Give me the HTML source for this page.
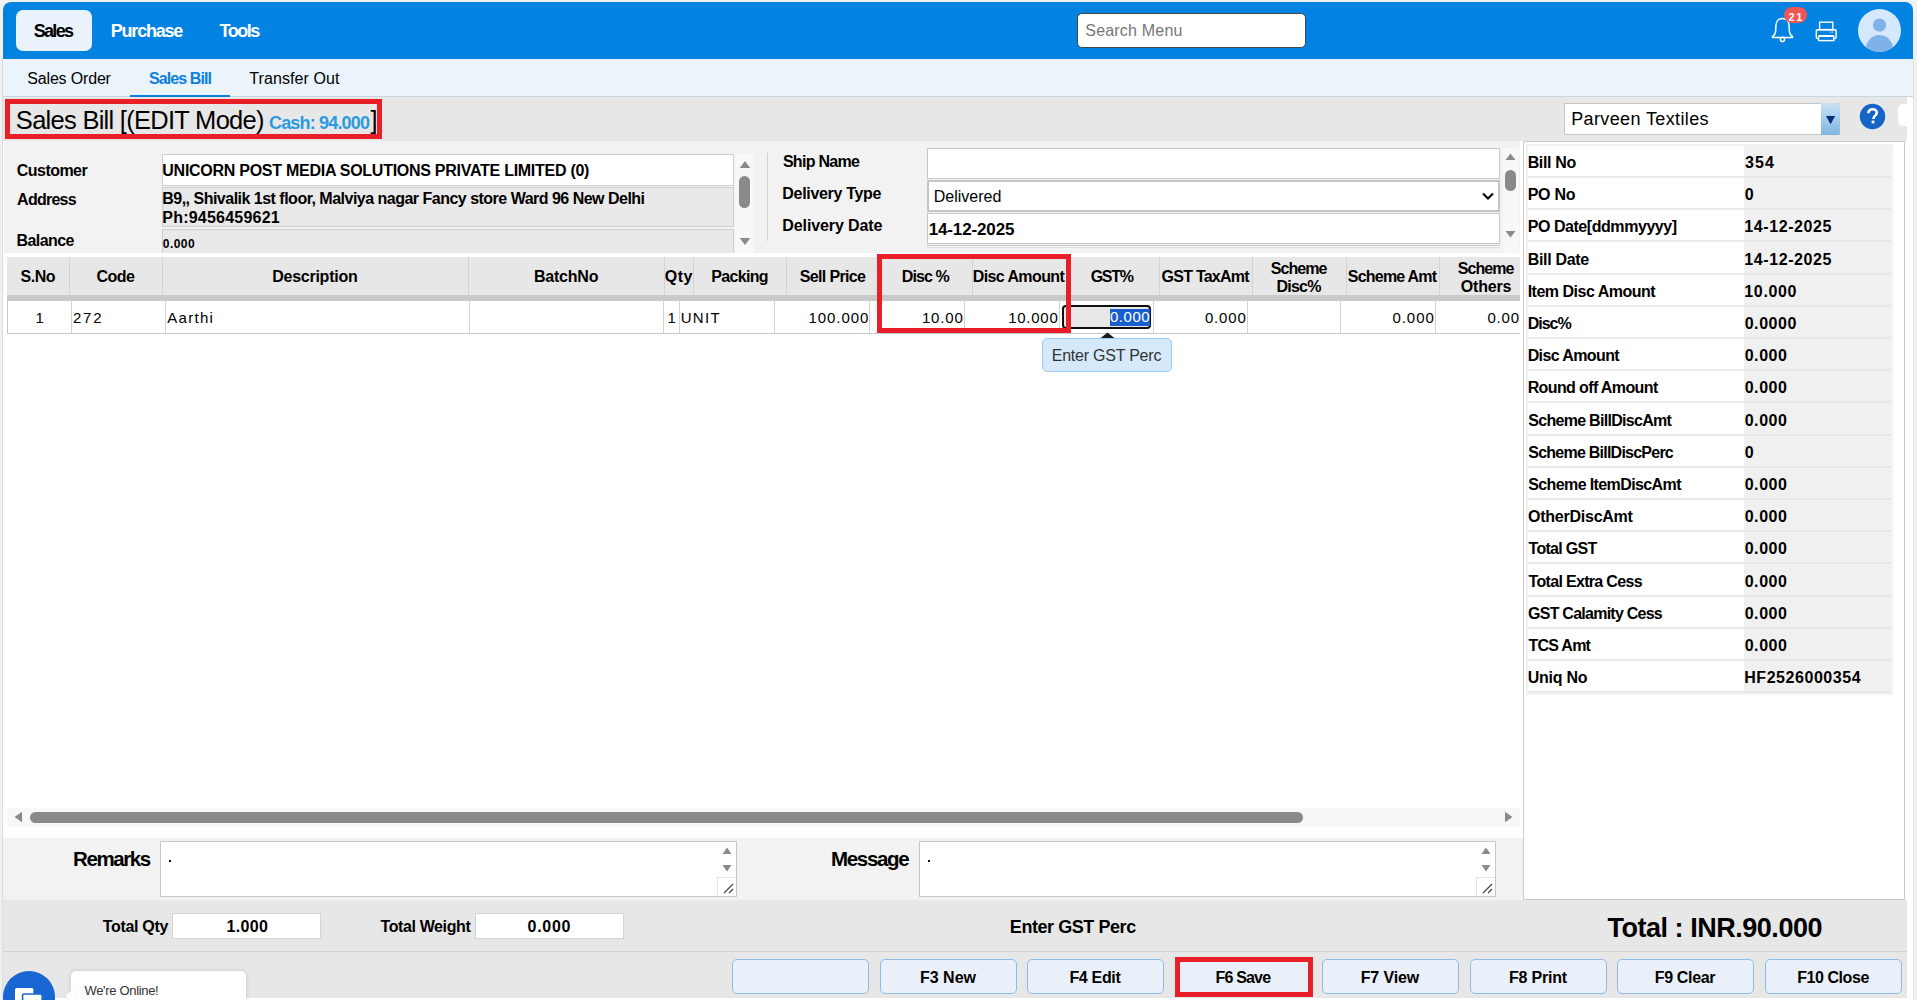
<!DOCTYPE html>
<html><head><meta charset="utf-8"><title>Sales Bill</title>
<style>
html,body{margin:0;padding:0;}
body{width:1917px;height:1000px;position:relative;overflow:hidden;background:#f1f1f1;font-family:"Liberation Sans",sans-serif;color:#000;}
.a{position:absolute;box-sizing:border-box;}
.t{position:absolute;white-space:pre;line-height:1;}
svg{position:absolute;overflow:visible;}
</style></head><body>
<div class="a" style="left:2px;top:59px;width:1912px;height:941px;background:#fff;border-left:1px solid #dcdcdc;border-right:1px solid #e2e2e2"></div>
<div class="a" style="left:3px;top:2px;width:1910px;height:57px;background:#0283e2;border-radius:8px 8px 0 0"></div>
<div class="a" style="left:16px;top:10px;width:76px;height:41px;background:#eaf2fb;border-radius:7px"></div>
<div class="t" style="left:33.66px;top:22.26px;font-size:18px;font-weight:700;letter-spacing:-1.680px;">Sales</div>
<div class="t" style="left:110.83px;top:22.26px;font-size:18px;font-weight:700;letter-spacing:-1.229px;color:#fff;">Purchase</div>
<div class="t" style="left:219.42px;top:22.26px;font-size:18px;font-weight:700;letter-spacing:-1.430px;color:#fff;">Tools</div>
<div class="a" style="left:1077px;top:13px;width:229px;height:35px;background:#fff;border:1px solid #3f4a45;border-radius:5px"></div>
<div class="t" style="left:1085.28px;top:22.66px;font-size:16px;letter-spacing:0.194px;color:#767676;">Search Menu</div>
<svg style="left:1770px;top:16px" width="26" height="28" viewBox="0 0 26 28">
<path d="M12.5 2.4c-4 0-6.4 3.2-6.6 7.2l-.3 6c-.1 2-1.2 3.7-3.2 5.1v.9h20.2v-.9c-2-1.4-3.1-3.1-3.2-5.1l-.3-6c-.2-4-2.6-7.2-6.6-7.2z" fill="none" stroke="#fff" stroke-width="1.5" stroke-linejoin="round"/>
<circle cx="12.5" cy="23.4" r="2.1" fill="none" stroke="#fff" stroke-width="1.4"/>
</svg>
<div class="a" style="left:1784px;top:7px;width:23px;height:16px;background:#f25555;border-radius:8px"></div>
<div class="t" style="left:1788.62px;top:11.79px;font-size:11px;font-weight:700;letter-spacing:1.450px;color:#fff;">21</div>
<svg style="left:1814px;top:20px" width="26" height="24" viewBox="0 0 26 24">
<rect x="5.6" y="2.2" width="13.2" height="7.4" fill="none" stroke="#fff" stroke-width="1.4"/>
<path d="M5 9.6H3.4c-.6 0-1.1.5-1.1 1.1v6.8c0 .6.5 1.1 1.1 1.1H5M19.4 9.6H21c.6 0 1.1.5 1.1 1.1v6.8c0 .6-.5 1.1-1.1 1.1h-1.6" fill="none" stroke="#fff" stroke-width="1.4"/>
<rect x="3" y="9.2" width="18.4" height="1.4" fill="#fff"/>
<rect x="4.6" y="16.2" width="15.2" height="4.4" fill="none" stroke="#fff" stroke-width="1.4"/>
<rect x="5" y="15" width="14.4" height="1.2" fill="#fff"/>
<rect x="15.8" y="11.6" width="1.1" height="1" fill="#fff"/><rect x="17.8" y="11.6" width="1.1" height="1" fill="#fff"/>
</svg>
<svg style="left:1858px;top:9px" width="43" height="43" viewBox="0 0 43 43">
<defs><clipPath id="avc"><circle cx="21.5" cy="21.5" r="21.5"/></clipPath></defs>
<circle cx="21.5" cy="21.5" r="21.5" fill="#d6e8fb"/>
<g clip-path="url(#avc)"><circle cx="21.5" cy="16" r="6.6" fill="#7fb2ea"/>
<ellipse cx="21.5" cy="40" rx="13.5" ry="14" fill="#7fb2ea"/></g>
</svg>
<div class="a" style="left:3px;top:59px;width:1910px;height:38px;background:#ebf3fb;border-bottom:1px solid #c9d7e3"></div>
<div class="t" style="left:27.28px;top:71.46px;font-size:16px;letter-spacing:-0.170px;">Sales Order</div>
<div class="t" style="left:149.02px;top:71.46px;font-size:16px;font-weight:700;letter-spacing:-0.900px;color:#0a7fe0;">Sales Bill</div>
<div class="a" style="left:130px;top:95px;width:100px;height:2px;background:#0a7fe0"></div>
<div class="t" style="left:249.28px;top:71.46px;font-size:16px;letter-spacing:0.082px;">Transfer Out</div>
<div class="a" style="left:3px;top:97px;width:1904px;height:44px;background:#e7e7e7"></div>
<div class="a" style="left:5px;top:99px;width:377px;height:40px;border:5px solid #e81f27"></div>
<div class="t" style="left:15.85px;top:108.01px;font-size:25.5px;letter-spacing:-0.721px;">Sales Bill [(EDIT Mode)</div>
<div class="t" style="left:268.98px;top:113.76px;font-size:18px;font-weight:700;letter-spacing:-0.821px;color:#2b9ae0;">Cash: 94.000</div>
<div class="t" style="left:370.47px;top:108.01px;font-size:25.5px;">]</div>
<div class="a" style="left:1564px;top:103px;width:276px;height:32px;background:#fff;border:1px solid #c6c6c6"></div>
<div class="a" style="left:1821px;top:103px;width:19px;height:32px;background:linear-gradient(#c9e2f5,#7fb6e3);border-radius:0 3px 3px 0"></div>
<svg style="left:1825px;top:115px" width="12" height="10" viewBox="0 0 12 10"><path d="M1 1h9.2L5.6 9.2z" fill="#0b2f7e"/></svg>
<div class="t" style="left:1571.16px;top:110.06px;font-size:18px;letter-spacing:0.381px;">Parveen Textiles</div>
<svg style="left:1859px;top:103px" width="27" height="27" viewBox="0 0 27 27">
<circle cx="13.5" cy="13.5" r="12.7" fill="#1565c9"/>
<path d="M9.4 10.2c0-2.4 1.8-4 4.2-4s4.2 1.5 4.2 3.6c0 2.6-3.3 3-3.3 5.6v.5" fill="none" stroke="#fff" stroke-width="2.6"/>
<rect x="12.6" y="17.6" width="2.8" height="2.8" fill="#fff"/>
</svg>
<div class="a" style="left:1898px;top:104px;width:9px;height:22px;background:#fff;border-radius:5px 0 0 5px"></div>
<div class="a" style="left:4px;top:141px;width:1516px;height:112px;background:#f2f2f2"></div>
<div class="t" style="left:16.86px;top:162.86px;font-size:16px;font-weight:700;letter-spacing:-0.549px;">Customer</div>
<div class="t" style="left:17.10px;top:191.86px;font-size:16px;font-weight:700;letter-spacing:-0.743px;">Address</div>
<div class="t" style="left:16.46px;top:232.76px;font-size:16px;font-weight:700;letter-spacing:-0.560px;">Balance</div>
<div class="a" style="left:162px;top:154px;width:572px;height:32px;background:#fff;border:1px solid #cfcfcf"></div>
<div class="t" style="left:162.34px;top:162.56px;font-size:16px;font-weight:700;letter-spacing:-0.268px;">UNICORN POST MEDIA SOLUTIONS PRIVATE LIMITED (0)</div>
<div class="a" style="left:162px;top:187px;width:572px;height:40px;background:#e9e9e9;border:1px solid #cfcfcf"></div>
<div class="t" style="left:162.26px;top:191.26px;font-size:16px;font-weight:700;letter-spacing:-0.509px;">B9,, Shivalik 1st floor, Malviya nagar Fancy store Ward 96 New Delhi</div>
<div class="t" style="left:162.26px;top:209.56px;font-size:16px;font-weight:700;letter-spacing:0.227px;">Ph:9456459621</div>
<div class="a" style="left:162px;top:229px;width:572px;height:24px;background:#e9e9e9;border:1px solid #cfcfcf;border-bottom:none"></div>
<div class="t" style="left:162.82px;top:237.94px;font-size:12px;font-weight:700;letter-spacing:0.440px;">0.000</div>
<div class="a" style="left:735px;top:153px;width:19px;height:100px;background:#f8f8f8"></div>
<svg style="left:739px;top:160px" width="12" height="9" viewBox="0 0 12 9"><path d="M0.7 8h10.6L6 1z" fill="#8a8a8a"/></svg>
<div class="a" style="left:739px;top:176px;width:11px;height:32px;background:#8a8a8a;border-radius:6px"></div>
<svg style="left:739px;top:237px" width="12" height="9" viewBox="0 0 12 9"><path d="M0.7 1h10.6L6 8z" fill="#8a8a8a"/></svg>
<div class="a" style="left:767px;top:153px;width:1px;height:88px;background:#d2d2d2"></div>
<div class="t" style="left:782.92px;top:154.46px;font-size:16px;font-weight:700;letter-spacing:-0.712px;">Ship Name</div>
<div class="t" style="left:782.36px;top:186.06px;font-size:16px;font-weight:700;letter-spacing:-0.323px;">Delivery Type</div>
<div class="t" style="left:782.36px;top:217.86px;font-size:16px;font-weight:700;letter-spacing:-0.113px;">Delivery Date</div>
<div class="a" style="left:927px;top:148px;width:573px;height:31px;background:#fff;border:1px solid #c8c8c8"></div>
<div class="a" style="left:927px;top:180px;width:573px;height:32px;background:#fff;border:2px solid #c4c4c4"></div>
<div class="t" style="left:933.72px;top:189.06px;font-size:16px;">Delivered</div>
<svg style="left:1481px;top:191px" width="14" height="10" viewBox="0 0 14 10"><path d="M2 2.5l5 5 5-5" fill="none" stroke="#000" stroke-width="2"/></svg>
<div class="a" style="left:927px;top:213px;width:573px;height:31px;background:#fff;border:1px solid #c8c8c8"></div>
<div class="t" style="left:928.68px;top:221.41px;font-size:17px;font-weight:700;letter-spacing:-0.134px;">14-12-2025</div>
<div class="a" style="left:927px;top:245px;width:573px;height:3px;background:#f7f7f7;border-top:1px solid #c8c8c8;border-bottom:1px solid #dedede"></div>
<div class="a" style="left:1503px;top:148px;width:16px;height:105px;background:#f8f8f8"></div>
<svg style="left:1505px;top:152px" width="11" height="9" viewBox="0 0 11 9"><path d="M0.5 8h10L5.5 1.5z" fill="#8a8a8a"/></svg>
<div class="a" style="left:1505px;top:170px;width:11px;height:21px;background:#8a8a8a;border-radius:6px"></div>
<svg style="left:1505px;top:230px" width="11" height="9" viewBox="0 0 11 9"><path d="M0.5 1h10L5.5 7.5z" fill="#8a8a8a"/></svg>
<div class="a" style="left:7px;top:257px;width:1513px;height:38px;background:#e7e7e7"></div>
<div class="a" style="left:7px;top:295px;width:1513px;height:6px;background:#c9c9c9"></div>
<div class="a" style="left:69px;top:257px;width:1px;height:38px;background:#d2d2d2"></div>
<div class="a" style="left:162px;top:257px;width:1px;height:38px;background:#d2d2d2"></div>
<div class="a" style="left:468px;top:257px;width:1px;height:38px;background:#d2d2d2"></div>
<div class="a" style="left:664px;top:257px;width:1px;height:38px;background:#d2d2d2"></div>
<div class="a" style="left:693px;top:257px;width:1px;height:38px;background:#d2d2d2"></div>
<div class="a" style="left:786px;top:257px;width:1px;height:38px;background:#d2d2d2"></div>
<div class="a" style="left:877px;top:257px;width:1px;height:38px;background:#d2d2d2"></div>
<div class="a" style="left:972px;top:257px;width:1px;height:38px;background:#d2d2d2"></div>
<div class="a" style="left:1066px;top:257px;width:1px;height:38px;background:#d2d2d2"></div>
<div class="a" style="left:1159px;top:257px;width:1px;height:38px;background:#d2d2d2"></div>
<div class="a" style="left:1252px;top:257px;width:1px;height:38px;background:#d2d2d2"></div>
<div class="a" style="left:1346px;top:257px;width:1px;height:38px;background:#d2d2d2"></div>
<div class="a" style="left:1439px;top:257px;width:1px;height:38px;background:#d2d2d2"></div>
<div class="a" style="left:7px;top:301px;width:1513px;height:33px;background:#fff;border-left:1px solid #c8c8c8;border-bottom:1px solid #c8c8c8"></div>
<div class="a" style="left:71px;top:301px;width:1px;height:32px;background:#d2d2d2"></div>
<div class="a" style="left:165px;top:301px;width:1px;height:32px;background:#d2d2d2"></div>
<div class="a" style="left:469px;top:301px;width:1px;height:32px;background:#d2d2d2"></div>
<div class="a" style="left:663px;top:301px;width:1px;height:32px;background:#d2d2d2"></div>
<div class="a" style="left:679px;top:301px;width:1px;height:32px;background:#d2d2d2"></div>
<div class="a" style="left:774px;top:301px;width:1px;height:32px;background:#d2d2d2"></div>
<div class="a" style="left:869px;top:301px;width:1px;height:32px;background:#d2d2d2"></div>
<div class="a" style="left:964px;top:301px;width:1px;height:32px;background:#d2d2d2"></div>
<div class="a" style="left:1059px;top:301px;width:1px;height:32px;background:#d2d2d2"></div>
<div class="a" style="left:1153px;top:301px;width:1px;height:32px;background:#d2d2d2"></div>
<div class="a" style="left:1247px;top:301px;width:1px;height:32px;background:#d2d2d2"></div>
<div class="a" style="left:1340px;top:301px;width:1px;height:32px;background:#d2d2d2"></div>
<div class="a" style="left:1435px;top:301px;width:1px;height:32px;background:#d2d2d2"></div>
<div class="t" style="left:20.47px;top:269.26px;font-size:16px;font-weight:700;letter-spacing:-0.460px;">S.No</div>
<div class="t" style="left:96.51px;top:269.26px;font-size:16px;font-weight:700;letter-spacing:-0.567px;">Code</div>
<div class="t" style="left:272.26px;top:269.26px;font-size:16px;font-weight:700;letter-spacing:-0.260px;">Description</div>
<div class="t" style="left:534.01px;top:269.26px;font-size:16px;font-weight:700;letter-spacing:-0.230px;">BatchNo</div>
<div class="t" style="left:664.71px;top:269.26px;font-size:16px;font-weight:700;letter-spacing:0.490px;">Qty</div>
<div class="t" style="left:711.26px;top:269.26px;font-size:16px;font-weight:700;letter-spacing:-0.680px;">Packing</div>
<div class="t" style="left:799.77px;top:269.26px;font-size:16px;font-weight:700;letter-spacing:-0.651px;">Sell Price</div>
<div class="t" style="left:901.76px;top:269.26px;font-size:16px;font-weight:700;letter-spacing:-0.888px;">Disc %</div>
<div class="t" style="left:972.76px;top:269.26px;font-size:16px;font-weight:700;letter-spacing:-0.600px;">Disc Amount</div>
<div class="t" style="left:1090.66px;top:269.26px;font-size:16px;font-weight:700;letter-spacing:-1.293px;">GST%</div>
<div class="t" style="left:1161.61px;top:269.26px;font-size:16px;font-weight:700;letter-spacing:-0.767px;">GST TaxAmt</div>
<div class="t" style="left:1270.82px;top:261.06px;font-size:16px;font-weight:700;letter-spacing:-0.944px;">Scheme</div>
<div class="t" style="left:1276.51px;top:279.06px;font-size:16px;font-weight:700;letter-spacing:-0.765px;">Disc%</div>
<div class="t" style="left:1347.82px;top:269.26px;font-size:16px;font-weight:700;letter-spacing:-0.787px;">Scheme Amt</div>
<div class="t" style="left:1457.82px;top:261.06px;font-size:16px;font-weight:700;letter-spacing:-0.944px;">Scheme</div>
<div class="t" style="left:1460.81px;top:279.06px;font-size:16px;font-weight:700;letter-spacing:-0.188px;">Others</div>
<div class="t" style="left:35.41px;top:310.30px;font-size:15px;">1</div>
<div class="t" style="left:72.95px;top:310.30px;font-size:15px;letter-spacing:1.762px;">272</div>
<div class="t" style="left:167.30px;top:310.30px;font-size:15px;letter-spacing:1.285px;">Aarthi</div>
<div class="t" style="left:667.55px;top:310.30px;font-size:15px;">1</div>
<div class="t" style="left:680.67px;top:310.30px;font-size:15px;letter-spacing:1.325px;">UNIT</div>
<div class="t" style="left:808.58px;top:310.30px;font-size:15px;letter-spacing:0.904px;">100.000</div>
<div class="t" style="left:921.88px;top:310.30px;font-size:15px;letter-spacing:0.863px;">10.00</div>
<div class="t" style="left:1008.17px;top:310.30px;font-size:15px;letter-spacing:0.750px;">10.000</div>
<div class="a" style="left:1062px;top:305px;width:89px;height:24px;background:#e8e8e8;border:2px solid #111;border-radius:4px"></div>
<div class="a" style="left:1110px;top:309px;width:40px;height:17px;background:#1a5fd0"></div>
<div class="t" style="left:1109.90px;top:309.40px;font-size:15px;letter-spacing:0.556px;color:#fff;">0.000</div>
<div class="t" style="left:1204.90px;top:310.30px;font-size:15px;letter-spacing:0.831px;">0.000</div>
<div class="t" style="left:1392.40px;top:310.30px;font-size:15px;letter-spacing:0.981px;">0.000</div>
<div class="t" style="left:1487.40px;top:310.30px;font-size:15px;letter-spacing:0.850px;">0.00</div>
<div class="a" style="left:877px;top:254px;width:194px;height:79px;border:5px solid #e81f27"></div>
<svg style="left:1100px;top:332px" width="15" height="7" viewBox="0 0 15 7"><path d="M0 6.5L7.5 0.5 15 6.5z" fill="#1b1b1b"/></svg>
<div class="a" style="left:1042px;top:338px;width:130px;height:34px;background:#d5e9fb;border:1px solid #9ccaf3;border-radius:5px"></div>
<div class="t" style="left:1051.72px;top:347.66px;font-size:16px;letter-spacing:-0.228px;color:#333;">Enter GST Perc</div>
<div class="a" style="left:7px;top:808px;width:1513px;height:19px;background:#f8f8f8"></div>
<svg style="left:13px;top:811px" width="10" height="12" viewBox="0 0 10 12"><path d="M9 0.7v10.6L1.5 6z" fill="#8a8a8a"/></svg>
<div class="a" style="left:30px;top:812px;width:1273px;height:11px;background:#8a8a8a;border-radius:6px"></div>
<svg style="left:1504px;top:811px" width="10" height="12" viewBox="0 0 10 12"><path d="M1 0.7v10.6L8.5 6z" fill="#8a8a8a"/></svg>
<div class="a" style="left:3px;top:838px;width:1520px;height:62px;background:#f2f2f2"></div>
<div class="t" style="left:72.97px;top:848.75px;font-size:20.5px;font-weight:700;letter-spacing:-1.393px;">Remarks</div>
<div class="t" style="left:830.97px;top:848.65px;font-size:20.5px;font-weight:700;letter-spacing:-1.310px;">Message</div>
<div class="a" style="left:160px;top:841px;width:577px;height:56px;background:#fff;border:1px solid #c8c8c8"></div>
<div class="a" style="left:717px;top:842px;width:19px;height:54px;background:#fff"></div>
<svg style="left:722px;top:846px" width="10" height="9" viewBox="0 0 10 9"><path d="M0.5 8h9L5 1.5z" fill="#8a8a8a"/></svg>
<svg style="left:722px;top:864px" width="10" height="9" viewBox="0 0 10 9"><path d="M0.5 1h9L5 7.5z" fill="#8a8a8a"/></svg>
<div class="a" style="left:717px;top:877px;width:19px;height:19px;background:#fff;border-left:1px solid #e4e4e4;border-top:1px solid #e4e4e4"></div>
<svg style="left:721px;top:881px" width="14" height="14" viewBox="0 0 14 14"><path d="M3 12L12 3M8 12l4-4" fill="none" stroke="#444" stroke-width="1.2"/></svg>
<div class="a" style="left:169px;top:860px;width:2px;height:2px;background:#111"></div>
<div class="a" style="left:919px;top:841px;width:577px;height:56px;background:#fff;border:1px solid #c8c8c8"></div>
<div class="a" style="left:1476px;top:842px;width:19px;height:54px;background:#fff"></div>
<svg style="left:1481px;top:846px" width="10" height="9" viewBox="0 0 10 9"><path d="M0.5 8h9L5 1.5z" fill="#8a8a8a"/></svg>
<svg style="left:1481px;top:864px" width="10" height="9" viewBox="0 0 10 9"><path d="M0.5 1h9L5 7.5z" fill="#8a8a8a"/></svg>
<div class="a" style="left:1476px;top:877px;width:19px;height:19px;background:#fff;border-left:1px solid #e4e4e4;border-top:1px solid #e4e4e4"></div>
<svg style="left:1480px;top:881px" width="14" height="14" viewBox="0 0 14 14"><path d="M3 12L12 3M8 12l4-4" fill="none" stroke="#444" stroke-width="1.2"/></svg>
<div class="a" style="left:928px;top:860px;width:2px;height:2px;background:#111"></div>
<div class="a" style="left:1523px;top:141px;width:382px;height:759px;background:#fff;border:1px solid #cbcbcb"></div>
<div class="a" style="left:1526px;top:144px;width:367px;height:551px;background:#f2f2f2"></div>
<div class="a" style="left:1528px;top:146px;width:216px;height:32px;background:#fff;border-bottom:2px solid #eaeaea"></div>
<div class="a" style="left:1744px;top:146px;width:147px;height:32px;background:#f0f0f0;border-bottom:2px solid #e6e6e6"></div>
<div class="t" style="left:1527.66px;top:155.06px;font-size:16px;font-weight:700;letter-spacing:-0.360px;">Bill No</div>
<div class="t" style="left:1744.90px;top:155.06px;font-size:16px;font-weight:700;letter-spacing:1.120px;">354</div>
<div class="a" style="left:1528px;top:178px;width:216px;height:32px;background:#fff;border-bottom:2px solid #eaeaea"></div>
<div class="a" style="left:1744px;top:178px;width:147px;height:32px;background:#f0f0f0;border-bottom:2px solid #e6e6e6"></div>
<div class="t" style="left:1527.66px;top:187.26px;font-size:16px;font-weight:700;letter-spacing:-0.250px;">PO No</div>
<div class="t" style="left:1744.66px;top:187.26px;font-size:16px;font-weight:700;">0</div>
<div class="a" style="left:1528px;top:210px;width:216px;height:32px;background:#fff;border-bottom:2px solid #eaeaea"></div>
<div class="a" style="left:1744px;top:210px;width:147px;height:32px;background:#f0f0f0;border-bottom:2px solid #e6e6e6"></div>
<div class="t" style="left:1527.66px;top:219.46px;font-size:16px;font-weight:700;letter-spacing:-0.441px;">PO Date[ddmmyyyy]</div>
<div class="t" style="left:1744.34px;top:219.46px;font-size:16px;font-weight:700;letter-spacing:0.591px;">14-12-2025</div>
<div class="a" style="left:1528px;top:242px;width:216px;height:33px;background:#fff;border-bottom:2px solid #eaeaea"></div>
<div class="a" style="left:1744px;top:242px;width:147px;height:33px;background:#f0f0f0;border-bottom:2px solid #e6e6e6"></div>
<div class="t" style="left:1527.66px;top:251.66px;font-size:16px;font-weight:700;letter-spacing:-0.300px;">Bill Date</div>
<div class="t" style="left:1744.34px;top:251.66px;font-size:16px;font-weight:700;letter-spacing:0.591px;">14-12-2025</div>
<div class="a" style="left:1528px;top:275px;width:216px;height:32px;background:#fff;border-bottom:2px solid #eaeaea"></div>
<div class="a" style="left:1744px;top:275px;width:147px;height:32px;background:#f0f0f0;border-bottom:2px solid #e6e6e6"></div>
<div class="t" style="left:1527.66px;top:283.86px;font-size:16px;font-weight:700;letter-spacing:-0.497px;">Item Disc Amount</div>
<div class="t" style="left:1744.34px;top:283.86px;font-size:16px;font-weight:700;letter-spacing:0.628px;">10.000</div>
<div class="a" style="left:1528px;top:307px;width:216px;height:32px;background:#fff;border-bottom:2px solid #eaeaea"></div>
<div class="a" style="left:1744px;top:307px;width:147px;height:32px;background:#f0f0f0;border-bottom:2px solid #e6e6e6"></div>
<div class="t" style="left:1527.66px;top:316.06px;font-size:16px;font-weight:700;letter-spacing:-0.990px;">Disc%</div>
<div class="t" style="left:1744.66px;top:316.06px;font-size:16px;font-weight:700;letter-spacing:0.564px;">0.0000</div>
<div class="a" style="left:1528px;top:339px;width:216px;height:32px;background:#fff;border-bottom:2px solid #eaeaea"></div>
<div class="a" style="left:1744px;top:339px;width:147px;height:32px;background:#f0f0f0;border-bottom:2px solid #e6e6e6"></div>
<div class="t" style="left:1527.66px;top:348.26px;font-size:16px;font-weight:700;letter-spacing:-0.610px;">Disc Amount</div>
<div class="t" style="left:1744.66px;top:348.26px;font-size:16px;font-weight:700;letter-spacing:0.570px;">0.000</div>
<div class="a" style="left:1528px;top:371px;width:216px;height:32px;background:#fff;border-bottom:2px solid #eaeaea"></div>
<div class="a" style="left:1744px;top:371px;width:147px;height:32px;background:#f0f0f0;border-bottom:2px solid #e6e6e6"></div>
<div class="t" style="left:1527.66px;top:380.46px;font-size:16px;font-weight:700;letter-spacing:-0.617px;">Round off Amount</div>
<div class="t" style="left:1744.66px;top:380.46px;font-size:16px;font-weight:700;letter-spacing:0.570px;">0.000</div>
<div class="a" style="left:1528px;top:403px;width:216px;height:33px;background:#fff;border-bottom:2px solid #eaeaea"></div>
<div class="a" style="left:1744px;top:403px;width:147px;height:33px;background:#f0f0f0;border-bottom:2px solid #e6e6e6"></div>
<div class="t" style="left:1528.22px;top:412.66px;font-size:16px;font-weight:700;letter-spacing:-0.704px;">Scheme BillDiscAmt</div>
<div class="t" style="left:1744.66px;top:412.66px;font-size:16px;font-weight:700;letter-spacing:0.570px;">0.000</div>
<div class="a" style="left:1528px;top:436px;width:216px;height:32px;background:#fff;border-bottom:2px solid #eaeaea"></div>
<div class="a" style="left:1744px;top:436px;width:147px;height:32px;background:#f0f0f0;border-bottom:2px solid #e6e6e6"></div>
<div class="t" style="left:1528.22px;top:444.86px;font-size:16px;font-weight:700;letter-spacing:-0.758px;">Scheme BillDiscPerc</div>
<div class="t" style="left:1744.66px;top:444.86px;font-size:16px;font-weight:700;">0</div>
<div class="a" style="left:1528px;top:468px;width:216px;height:32px;background:#fff;border-bottom:2px solid #eaeaea"></div>
<div class="a" style="left:1744px;top:468px;width:147px;height:32px;background:#f0f0f0;border-bottom:2px solid #e6e6e6"></div>
<div class="t" style="left:1528.22px;top:477.06px;font-size:16px;font-weight:700;letter-spacing:-0.609px;">Scheme ItemDiscAmt</div>
<div class="t" style="left:1744.66px;top:477.06px;font-size:16px;font-weight:700;letter-spacing:0.570px;">0.000</div>
<div class="a" style="left:1528px;top:500px;width:216px;height:32px;background:#fff;border-bottom:2px solid #eaeaea"></div>
<div class="a" style="left:1744px;top:500px;width:147px;height:32px;background:#f0f0f0;border-bottom:2px solid #e6e6e6"></div>
<div class="t" style="left:1528.06px;top:509.26px;font-size:16px;font-weight:700;letter-spacing:-0.247px;">OtherDiscAmt</div>
<div class="t" style="left:1744.66px;top:509.26px;font-size:16px;font-weight:700;letter-spacing:0.570px;">0.000</div>
<div class="a" style="left:1528px;top:532px;width:216px;height:32px;background:#fff;border-bottom:2px solid #eaeaea"></div>
<div class="a" style="left:1744px;top:532px;width:147px;height:32px;background:#f0f0f0;border-bottom:2px solid #e6e6e6"></div>
<div class="t" style="left:1528.54px;top:541.46px;font-size:16px;font-weight:700;letter-spacing:-0.700px;">Total GST</div>
<div class="t" style="left:1744.66px;top:541.46px;font-size:16px;font-weight:700;letter-spacing:0.570px;">0.000</div>
<div class="a" style="left:1528px;top:564px;width:216px;height:33px;background:#fff;border-bottom:2px solid #eaeaea"></div>
<div class="a" style="left:1744px;top:564px;width:147px;height:33px;background:#f0f0f0;border-bottom:2px solid #e6e6e6"></div>
<div class="t" style="left:1528.54px;top:573.66px;font-size:16px;font-weight:700;letter-spacing:-0.677px;">Total Extra Cess</div>
<div class="t" style="left:1744.66px;top:573.66px;font-size:16px;font-weight:700;letter-spacing:0.570px;">0.000</div>
<div class="a" style="left:1528px;top:597px;width:216px;height:32px;background:#fff;border-bottom:2px solid #eaeaea"></div>
<div class="a" style="left:1744px;top:597px;width:147px;height:32px;background:#f0f0f0;border-bottom:2px solid #e6e6e6"></div>
<div class="t" style="left:1528.06px;top:605.86px;font-size:16px;font-weight:700;letter-spacing:-0.753px;">GST Calamity Cess</div>
<div class="t" style="left:1744.66px;top:605.86px;font-size:16px;font-weight:700;letter-spacing:0.570px;">0.000</div>
<div class="a" style="left:1528px;top:629px;width:216px;height:32px;background:#fff;border-bottom:2px solid #eaeaea"></div>
<div class="a" style="left:1744px;top:629px;width:147px;height:32px;background:#f0f0f0;border-bottom:2px solid #e6e6e6"></div>
<div class="t" style="left:1528.54px;top:638.06px;font-size:16px;font-weight:700;letter-spacing:-0.760px;">TCS Amt</div>
<div class="t" style="left:1744.66px;top:638.06px;font-size:16px;font-weight:700;letter-spacing:0.570px;">0.000</div>
<div class="a" style="left:1528px;top:661px;width:216px;height:32px;background:#fff;border-bottom:2px solid #eaeaea"></div>
<div class="a" style="left:1744px;top:661px;width:147px;height:32px;background:#f0f0f0;border-bottom:2px solid #e6e6e6"></div>
<div class="t" style="left:1527.74px;top:670.26px;font-size:16px;font-weight:700;letter-spacing:-0.247px;">Uniq No</div>
<div class="t" style="left:1744.26px;top:670.26px;font-size:16px;font-weight:700;letter-spacing:0.545px;">HF2526000354</div>
<div class="a" style="left:3px;top:900px;width:1904px;height:52px;background:#e7e7e7;border-bottom:1px solid #d4d4d4"></div>
<div class="t" style="left:102.64px;top:918.66px;font-size:16px;font-weight:700;letter-spacing:-0.303px;">Total Qty</div>
<div class="a" style="left:172px;top:913px;width:149px;height:26px;background:#fff;border:1px solid #d4d4d4"></div>
<div class="t" style="left:226.44px;top:918.66px;font-size:16px;font-weight:700;letter-spacing:0.350px;">1.000</div>
<div class="t" style="left:380.44px;top:918.66px;font-size:16px;font-weight:700;letter-spacing:-0.378px;">Total Weight</div>
<div class="a" style="left:475px;top:913px;width:149px;height:26px;background:#fff;border:1px solid #d4d4d4"></div>
<div class="t" style="left:527.56px;top:918.66px;font-size:16px;font-weight:700;letter-spacing:0.720px;">0.000</div>
<div class="t" style="left:1009.83px;top:917.66px;font-size:18px;font-weight:700;letter-spacing:-0.440px;">Enter GST Perc</div>
<div class="t" style="left:1607.43px;top:914.74px;font-size:27px;font-weight:700;letter-spacing:-0.469px;">Total : INR.90.000</div>
<div class="a" style="left:3px;top:952px;width:1904px;height:46px;background:#e7e7e7"></div>
<div class="a" style="left:732px;top:959px;width:137px;height:35px;background:#eaf0f9;border:1px solid #8dbbe8;border-radius:5px"></div>
<div class="a" style="left:880px;top:959px;width:137px;height:35px;background:#eaf0f9;border:1px solid #8dbbe8;border-radius:5px"></div>
<div class="t" style="left:919.91px;top:970.36px;font-size:16px;font-weight:700;letter-spacing:0.012px;">F3 New</div>
<div class="a" style="left:1027px;top:959px;width:137px;height:35px;background:#eaf0f9;border:1px solid #8dbbe8;border-radius:5px"></div>
<div class="t" style="left:1069.41px;top:970.36px;font-size:16px;font-weight:700;letter-spacing:-0.330px;">F4 Edit</div>
<div class="a" style="left:1175px;top:959px;width:137px;height:35px;background:#eaf0f9;border:1px solid #8dbbe8;border-radius:5px"></div>
<div class="t" style="left:1215.41px;top:970.36px;font-size:16px;font-weight:700;letter-spacing:-0.797px;">F6 Save</div>
<div class="a" style="left:1322px;top:959px;width:137px;height:35px;background:#eaf0f9;border:1px solid #8dbbe8;border-radius:5px"></div>
<div class="t" style="left:1360.66px;top:970.36px;font-size:16px;font-weight:700;letter-spacing:-0.120px;">F7 View</div>
<div class="a" style="left:1470px;top:959px;width:137px;height:35px;background:#eaf0f9;border:1px solid #8dbbe8;border-radius:5px"></div>
<div class="t" style="left:1508.96px;top:970.36px;font-size:16px;font-weight:700;letter-spacing:-0.189px;">F8 Print</div>
<div class="a" style="left:1617px;top:959px;width:137px;height:35px;background:#eaf0f9;border:1px solid #8dbbe8;border-radius:5px"></div>
<div class="t" style="left:1654.71px;top:970.36px;font-size:16px;font-weight:700;letter-spacing:-0.334px;">F9 Clear</div>
<div class="a" style="left:1765px;top:959px;width:137px;height:35px;background:#eaf0f9;border:1px solid #8dbbe8;border-radius:5px"></div>
<div class="t" style="left:1797.16px;top:970.36px;font-size:16px;font-weight:700;letter-spacing:-0.425px;">F10 Close</div>
<div class="a" style="left:1175px;top:957px;width:138px;height:40px;border:5px solid #e81f27"></div>
<div class="a" style="left:71px;top:971px;width:175px;height:39px;background:#fff;border-radius:5px;box-shadow:0 0 5px rgba(0,0,0,.15)"></div>
<div class="a" style="left:67px;top:992px;width:8px;height:8px;background:#fff;transform:rotate(45deg);box-shadow:0 0 2px rgba(0,0,0,.12)"></div>
<div class="t" style="left:84.44px;top:983.60px;font-size:13px;letter-spacing:-0.319px;color:#333;">We&#x27;re Online!</div>
<svg style="left:3px;top:971px" width="52" height="52" viewBox="0 0 52 52">
<circle cx="26" cy="26" r="26" fill="#1766d1"/>
<rect x="12" y="17" width="18.4" height="14" rx="1.5" fill="#fff"/>
<rect x="19.6" y="23" width="19.6" height="14" rx="1.5" fill="#fff" stroke="#1766d1" stroke-width="1.6"/>
</svg>
</body></html>
